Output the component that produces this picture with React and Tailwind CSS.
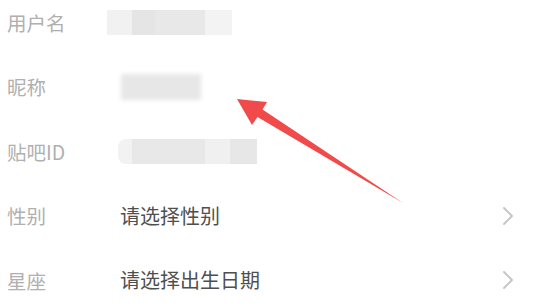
import React from 'react';

const font = { fontFamily: '"Noto Sans CJK SC", "Noto Sans", sans-serif' };

const Chevron = () => (
  <svg width="12" height="20" viewBox="0 0 12 20" className="shrink-0">
    <path d="M2 2 L10 10 L2 18" fill="none" stroke="#c4c4c4" strokeWidth="1.8" strokeLinecap="round" strokeLinejoin="round" />
  </svg>
);

const Row = ({ label, children, arrow }) => (
  <div className="flex items-center h-[64.5px] pl-[7px] pr-[28px]">
    <div className="w-[113px] shrink-0 text-[19.5px] text-[#b0b0b0] leading-none">{label}</div>
    <div className="flex-1 flex items-center">{children}</div>
    {arrow && <Chevron />}
  </div>
);

export default function App() {
  return (
    <div className="relative w-[542px] h-[308px] bg-white overflow-hidden" style={font}>
      <div className="flex flex-col -mt-[10px]">
        <Row label="用户名">
          <div className="-ml-[13px] flex h-[25px] blur-[0.6px]">
            <div className="w-[25px] bg-[#f1f1f1]" />
            <div className="w-[23px] bg-[#e5e5e5]" />
            <div className="w-[50px] bg-[#e8e8e8]" />
            <div className="w-[27px] bg-[#f3f3f3]" />
          </div>
        </Row>
        <Row label="昵称">
          <div className="ml-[1px] w-[80px] h-[26px] bg-[#e7e7e7] blur-[2px]" />
        </Row>
        <Row label="贴吧ID">
          <div className="-ml-[2px] flex h-[25px] blur-[0.6px]">
            <div className="w-[14px] bg-[#f2f2f2] rounded-l-[8px]" />
            <div className="w-[73px] bg-[#e8e8e8]" />
            <div className="w-[25px] bg-[#f0f0f0]" />
            <div className="w-[27px] bg-[#e7e7e7]" />
          </div>
        </Row>
        <Row label="性别" arrow>
          <span className="text-[20px] text-[#4f4f4f] leading-none">请选择性别</span>
        </Row>
        <Row label="星座" arrow>
          <span className="text-[20px] text-[#4f4f4f] leading-none">请选择出生日期</span>
        </Row>
      </div>

      <svg className="absolute left-0 top-0 pointer-events-none" width="542" height="308" viewBox="0 0 542 308">
        <polygon
          points="237,99 267,102 262.5,109.5 403,203 257.5,117 252,125"
          fill="#f04a4a"
          strokeLinejoin="round"
        />
      </svg>
    </div>
  );
}
